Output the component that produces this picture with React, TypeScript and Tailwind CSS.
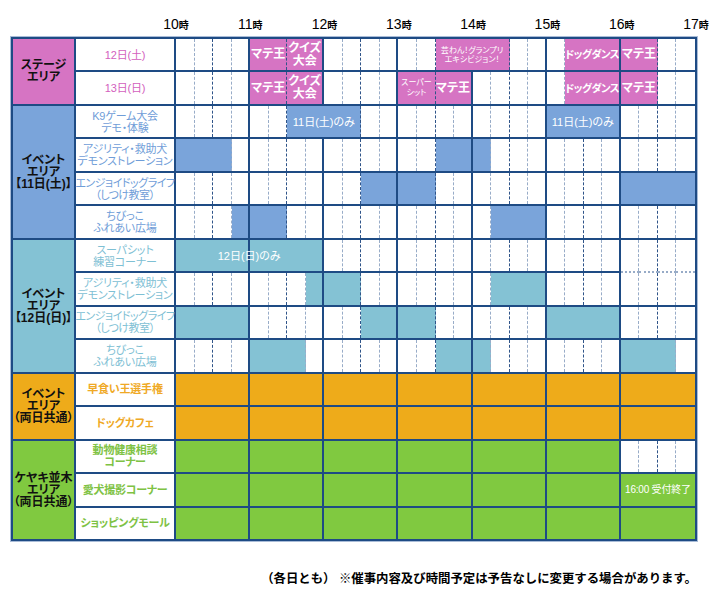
import React from 'react';

type Kind = 'stage' | 'dance' | 'small' | 'note' | 'tiny' | 'end';
type Seg = { s: number; e: number; label?: string; kind?: Kind; split?: boolean };
type Row = { name: string; segs: Seg[]; dottedBottomLast?: boolean };
type Group = { area: string; span: string; bg: string; seg: string; text: string; bold?: boolean; rows: Row[] };

const SPAN = ['', 'col-span-1', 'col-span-2', 'col-span-3', 'col-span-4', 'col-span-5', 'col-span-6', 'col-span-7', 'col-span-8'];

const allHours = (): Seg[] => [0, 1, 2, 3, 4, 5, 6].map((h) => ({ s: h * 4, e: h * 4 + 4 }));

const groups: Group[] = [
  {
    area: 'ステージ\nエリア',
    span: 'row-span-2',
    bg: 'bg-[#d674c3]',
    seg: 'bg-[#d674c3]',
    text: 'text-[#d35fbd]',
    rows: [
      {
        name: '12日(土)',
        segs: [
          { s: 4, e: 6, label: 'マテ王', kind: 'stage' },
          { s: 6, e: 8, label: 'クイズ\n大会', kind: 'stage' },
          { s: 14, e: 18, label: '芸わん！グランプリ\nエキシビジョン！', kind: 'tiny' },
          { s: 21, e: 24, label: 'ドッグダンス', kind: 'dance' },
          { s: 24, e: 26, label: 'マテ王', kind: 'stage' },
        ],
      },
      {
        name: '13日(日)',
        segs: [
          { s: 4, e: 6, label: 'マテ王', kind: 'stage' },
          { s: 6, e: 8, label: 'クイズ\n大会', kind: 'stage' },
          { s: 12, e: 14, label: 'スーパー\nシット', kind: 'small' },
          { s: 14, e: 16, label: 'マテ王', kind: 'stage' },
          { s: 21, e: 24, label: 'ドッグダンス', kind: 'dance' },
          { s: 24, e: 26, label: 'マテ王', kind: 'stage' },
        ],
      },
    ],
  },
  {
    area: 'イベント\nエリア\n【11日(土)】',
    span: 'row-span-4',
    bg: 'bg-[#7aa4da]',
    seg: 'bg-[#7aa4da]',
    text: 'text-[#6f9dd8]',
    rows: [
      {
        name: 'K9ゲーム大会\nデモ・体験',
        segs: [
          { s: 6, e: 10, label: '11日(土)のみ', kind: 'note' },
          { s: 20, e: 24, label: '11日(土)のみ', kind: 'note' },
        ],
      },
      {
        name: 'アジリティ・救助犬\nデモンストレーション',
        segs: [
          { s: 0, e: 3 },
          { s: 14, e: 16 },
          { s: 16, e: 17 },
        ],
      },
      {
        name: 'エンジョイドッグライフ\n（しつけ教室）',
        segs: [
          { s: 10, e: 12 },
          { s: 12, e: 14 },
          { s: 24, e: 28 },
        ],
      },
      {
        name: 'ちびっこ\nふれあい広場',
        segs: [
          { s: 3, e: 4 },
          { s: 4, e: 6 },
          { s: 17, e: 20 },
        ],
      },
    ],
  },
  {
    area: 'イベント\nエリア\n【12日(日)】',
    span: 'row-span-4',
    bg: 'bg-[#84c2d4]',
    seg: 'bg-[#84c2d4]',
    text: 'text-[#7ec0d4]',
    rows: [
      {
        name: 'スーパシット\n練習コーナー',
        segs: [{ s: 0, e: 8, label: '12日(日)のみ', kind: 'note', split: true }],
        dottedBottomLast: true,
      },
      {
        name: 'アジリティ・救助犬\nデモンストレーション',
        segs: [
          { s: 7, e: 8 },
          { s: 8, e: 10 },
          { s: 17, e: 20 },
        ],
      },
      {
        name: 'エンジョイドッグライフ\n（しつけ教室）',
        segs: [
          { s: 0, e: 4 },
          { s: 10, e: 12 },
          { s: 12, e: 14 },
          { s: 20, e: 24 },
        ],
      },
      {
        name: 'ちびっこ\nふれあい広場',
        segs: [
          { s: 4, e: 7 },
          { s: 14, e: 16 },
          { s: 16, e: 17 },
          { s: 24, e: 27 },
        ],
      },
    ],
  },
  {
    area: 'イベント\nエリア\n（両日共通）',
    span: 'row-span-2',
    bg: 'bg-[#eeab1a]',
    seg: 'bg-[#eeab1a]',
    text: 'text-[#efa925]',
    bold: true,
    rows: [
      { name: '早食い王選手権', segs: allHours() },
      { name: 'ドッグカフェ', segs: allHours() },
    ],
  },
  {
    area: 'ケヤキ並木\nエリア\n（両日共通）',
    span: 'row-span-3',
    bg: 'bg-[#80c940]',
    seg: 'bg-[#80c940]',
    text: 'text-[#7ec244]',
    bold: true,
    rows: [
      { name: '動物健康相談\nコーナー', segs: allHours().slice(0, 6) },
      {
        name: '愛犬撮影コーナー',
        segs: [...allHours().slice(0, 6), { s: 24, e: 28, label: '16:00 受付終了', kind: 'end' }],
      },
      { name: 'ショッピングモール', segs: allHours() },
    ],
  },
];

const NAVY = 'border-[#1e4b84]';

function innerRight(q: number): string {
  if (q === 27) return '';
  const p = q % 4;
  if (p === 3) return '';
  if (p === 1) return 'border-r border-dashed border-[#2f5489]';
  return 'border-r border-dashed border-[#98acc8]';
}

function outerRight(q: number): string {
  if (q === 27) return '';
  return q % 4 === 3 ? 'border-r-2' : '';
}

function labelClass(kind?: Kind): string {
  switch (kind) {
    case 'stage':
      return 'text-[12px] leading-[13px] font-bold whitespace-pre';
    case 'dance':
      return 'text-[10.5px] leading-[13px] font-bold tracking-[-0.6px] whitespace-pre';
    case 'small':
      return 'text-[8px] leading-[10px] whitespace-pre';
    case 'tiny':
      return 'text-[8px] leading-[9px] whitespace-pre';
    case 'end':
      return 'text-[10px] leading-[12px] whitespace-pre tracking-[-0.2px]';
    default:
      return 'text-[11px] leading-[12px] whitespace-pre';
  }
}

function TimeRow({ row, seg }: { row: Row; seg: string }) {
  const cells: React.ReactNode[] = [];
  let q = 0;
  while (q < 28) {
    const sg = row.segs.find((x) => x.s === q);
    if (sg) {
      const last = sg.e - 1;
      cells.push(
        <div
          key={q}
          className={`${SPAN[sg.e - sg.s]} ${seg} border-b-2 ${outerRight(last)} ${NAVY} relative`}
        >
          {sg.split ? (
            <>
              <div className="h-full flex">
                <div className={`flex-1 border-r-2 ${NAVY}`} />
                <div className="flex-1" />
              </div>
              <div
                className={`absolute inset-0 flex items-center justify-center text-white text-center ${labelClass(sg.kind)}`}
              >
                {sg.label}
              </div>
            </>
          ) : (
            <div
              className={`h-full flex items-center justify-center text-white text-center overflow-hidden ${innerRight(last)} ${labelClass(sg.kind)}`}
            >
              {sg.label}
            </div>
          )}
        </div>
      );
      q = sg.e;
    } else {
      const dotted = row.dottedBottomLast && q >= 24;
      cells.push(
        <div
          key={q}
          className={`bg-white border-b-2 ${outerRight(q)} ${
            dotted ? 'border-dotted border-[#97abc7]' : NAVY
          }`}
        >
          <div className={`h-full ${innerRight(q)}`} />
        </div>
      );
      q += 1;
    }
  }
  return <div className="col-start-3 grid grid-cols-28">{cells}</div>;
}

export default function App() {
  const hoursLabels = ['10', '11', '12', '13', '14', '15', '16', '17'];
  return (
    <div className="w-[710px] h-[602px] bg-white text-black font-['Liberation_Sans','Noto_Sans_CJK_JP',sans-serif] [font-feature-settings:'palt']">
      <div className="h-[37px] pl-[161px] pt-[17px]">
        <div className="w-[550px] flex justify-between">
          {hoursLabels.map((h) => (
            <div key={h} className="w-[30px] text-center leading-[14px] whitespace-nowrap">
              <span className="text-[14px]">{h}</span>
              <span className="text-[10px] font-bold">時</span>
            </div>
          ))}
        </div>
      </div>

      <div
        className={`ml-[11px] w-[686px] h-[504px] grid grid-cols-[63px_100px_519px] grid-rows-[repeat(15,minmax(0,1fr))] border-t-2 border-x-2 ${NAVY} shadow-[0_0_0_1px_#a9bcd7]`}
      >
        {groups.map((g, gi) => (
          <React.Fragment key={gi}>
            <div
              className={`col-start-1 ${g.span} ${g.bg} border-r-2 border-b-2 ${NAVY} flex items-center justify-center text-center whitespace-pre font-bold text-[12px] leading-[12px] text-[#111]`}
            >
              {g.area}
            </div>
            {g.rows.map((r, ri) => (
              <React.Fragment key={ri}>
                <div
                  className={`col-start-2 bg-white border-r-2 border-b-2 ${NAVY} flex items-center justify-center text-center whitespace-pre text-[11px] leading-[12px] ${
                    r.name.startsWith('エンジョイ') ? 'tracking-[-0.5px]' : 'tracking-[-0.2px]'
                  } ${g.text} ${g.bold ? 'font-bold' : ''}`}
                >
                  {r.name}
                </div>
                <TimeRow row={r} seg={g.seg} />
              </React.Fragment>
            ))}
          </React.Fragment>
        ))}
      </div>

      <div className="mt-[30px] pr-[13px] text-right text-[12.4px] leading-[16px] font-bold whitespace-nowrap [font-feature-settings:normal]">
        （各日とも） ※催事内容及び時間予定は予告なしに変更する場合があります。
      </div>
    </div>
  );
}
